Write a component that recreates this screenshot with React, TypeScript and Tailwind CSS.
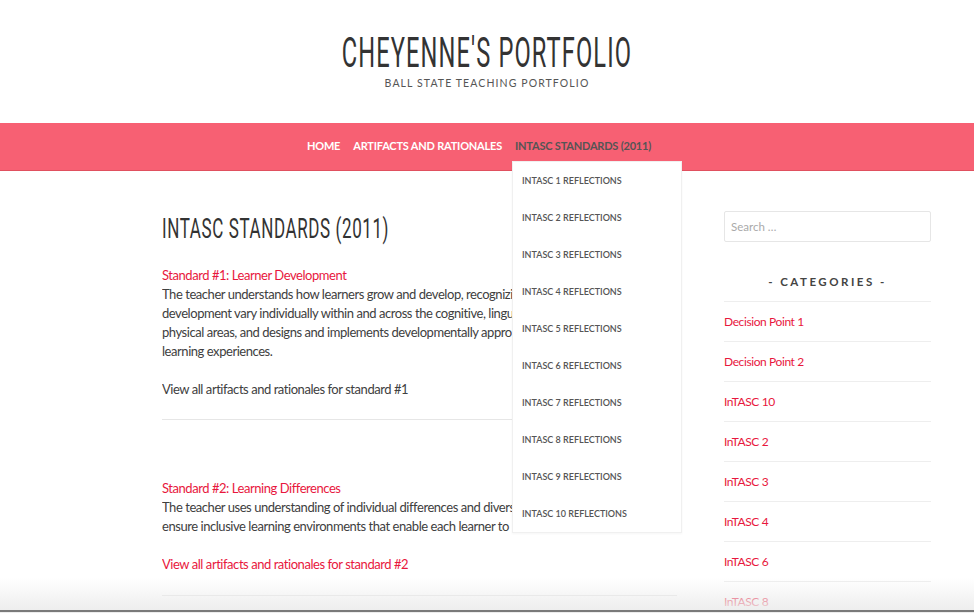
const navItems = ["HOME", "ARTIFACTS AND RATIONALES"];

const reflections = Array.from({ length: 10 }, (_, i) => `INTASC ${i + 1} REFLECTIONS`);

const categories = [
  "Decision Point 1",
  "Decision Point 2",
  "InTASC 10",
  "InTASC 2",
  "InTASC 3",
  "InTASC 4",
  "InTASC 6",
  "InTASC 8",
];

// no Oswald offline: Roboto squeezed sideways is the closest look
const display = { fontFamily: '"Roboto", "DejaVu Sans", sans-serif' };
const body = { fontFamily: '"Lato", "Open Sans", sans-serif' };

const App = () => {
  return (
    <div className="relative h-[613px] overflow-hidden bg-white text-[#404040]" style={body}>
      <header className="flex flex-col items-center pt-[30px] pb-[33px]">
        <h1
          className="inline-block scale-x-[0.55] whitespace-nowrap text-[43px] leading-[44px] font-normal tracking-[2px] text-[#333]"
          style={display}
        >
          CHEYENNE'S PORTFOLIO
        </h1>
        <p className="mt-[2px] text-[10.5px] leading-[14px] tracking-[1.1px] text-[#555]">
          BALL STATE TEACHING PORTFOLIO
        </p>
      </header>

      <nav className="relative z-10 h-[48px] bg-[#f76073] border-b border-[#e0505f]">
        <ul className="flex h-full items-center justify-center gap-[13px] pr-[16px] text-[11px] font-bold tracking-[-0.2px]">
          {navItems.map((item) => (
            <li key={item} className="text-white">
              {item}
            </li>
          ))}
          <li className="relative text-[#555]">
            INTASC STANDARDS (2011)
            <ul className="absolute left-[-3px] top-[23px] w-[170px] bg-white border border-[#f0f0f0] tracking-normal shadow-[0_1px_2px_rgba(0,0,0,0.04)]">
              {reflections.map((r) => (
                <li key={r} className="flex h-[37px] items-center pl-[9px] text-[9px] font-semibold text-[#555]">
                  {r}
                </li>
              ))}
            </ul>
          </li>
        </ul>
      </nav>

      <main className="flex pl-[162px] pt-[42px]">
        <section className="w-[515px]">
          <h2
            className="inline-block origin-left scale-x-[0.607] whitespace-nowrap text-[28px] leading-[32px] font-normal tracking-[1px] text-[#333]"
            style={display}
          >
            INTASC STANDARDS (2011)
          </h2>

          <div className="mt-[21px] overflow-hidden whitespace-nowrap text-[13px] leading-[19px] tracking-[-0.45px]">
            <a className="block text-[#e8173d]">Standard #1: Learner Development</a>
            <p>
              The teacher understands how learners grow and develop, recognizing that patterns of learning and
              <br />
              development vary individually within and across the cognitive, linguistic, social, emotional, and
              <br />
              physical areas, and designs and implements developmentally appropriate and challenging
              <br />
              learning experiences.
            </p>
            <p className="mt-[19px]">View all artifacts and rationales for standard #1</p>
            <hr className="mt-[20px] border-[#e6e6e6]" />
          </div>

          <div className="mt-[59px] overflow-hidden whitespace-nowrap text-[13px] leading-[19px] tracking-[-0.45px]">
            <a className="block text-[#e8173d]">Standard #2: Learning Differences</a>
            <p>
              The teacher uses understanding of individual differences and diverse cultures and communities to
              <br />
              ensure inclusive learning environments that enable each learner to meet high standards.
            </p>
            <a className="mt-[19px] block text-[#e8173d]">View all artifacts and rationales for standard #2</a>
            <hr className="mt-[21px] border-[#e6e6e6]" />
          </div>
        </section>

        <aside className="ml-[47px] -mt-[2px] w-[207px]">
          <input
            type="search"
            placeholder="Search …"
            className="h-[31px] w-full rounded-[2px] border border-[#e6e6e6] px-[6px] text-[11.5px] placeholder:text-[#aaa] outline-none"
          />
          <h3 className="mt-[31px] text-center text-[11.5px] font-bold tracking-[2.5px] text-[#444]">
            - CATEGORIES -
          </h3>
          <ul className="mt-[11px] border-t border-[#eee]">
            {categories.map((c) => (
              <li
                key={c}
                className="flex h-[40px] items-center border-b border-[#eee] text-[12px] tracking-[-0.4px] text-[#e8173d]"
              >
                {c}
              </li>
            ))}
          </ul>
        </aside>
      </main>

      <div className="pointer-events-none absolute inset-x-0 bottom-0 z-20 h-[35px] bg-gradient-to-b from-transparent to-[#ececec]" />
      <div className="pointer-events-none absolute inset-x-0 bottom-[1px] z-20 h-[2px] bg-[#7a7a7a]" />
    </div>
  );
};

export default App;
